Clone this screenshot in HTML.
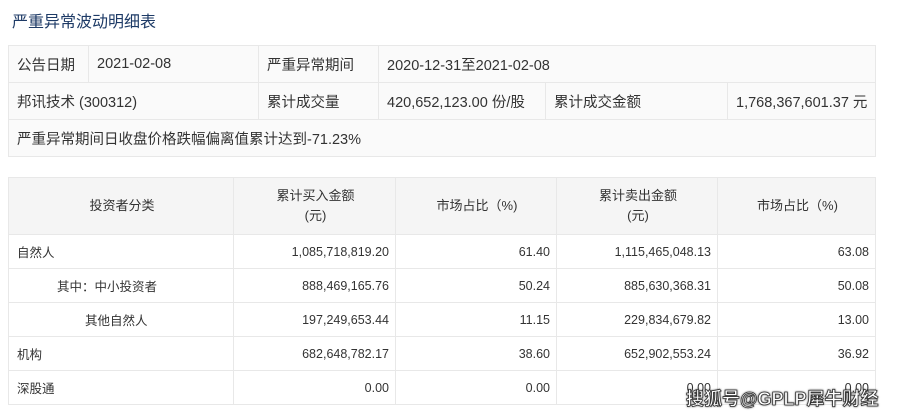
<!DOCTYPE html>
<html><head><meta charset="utf-8"><style>
body{margin:0;width:900px;height:418px;background:#fff;position:relative;overflow:hidden;font-family:"Liberation Sans","Noto Sans CJK SC",sans-serif;font-size:12.5px;color:#333}
.t{position:absolute;left:12px;top:8px;font-size:16px;color:#1d3a66}
.c{position:absolute;box-sizing:border-box;border:1px solid #e8e8e8;display:flex;align-items:center;padding:0 6px 0 8px;white-space:nowrap}
.a{background:#fafafa;font-size:14.5px}
.h{background:#f5f5f5;justify-content:center;text-align:center;line-height:20px;font-size:13px}
.r{justify-content:flex-end}
.w{position:absolute;left:686px;top:385px;font-size:18px;font-weight:bold;color:#fff;-webkit-text-stroke:0.8px #333;text-shadow:0 0 2px #000}
</style></head><body>
<div class="t">严重异常波动明细表</div>
<div class="c a" style="left:8px;top:45px;width:81px;height:38px">公告日期</div>
<div class="c a" style="left:88px;top:45px;width:171px;height:38px">2021-02-08</div>
<div class="c a" style="left:258px;top:45px;width:121px;height:38px">严重异常期间</div>
<div class="c a" style="left:378px;top:45px;width:498px;height:38px">2020-12-31至2021-02-08</div>
<div class="c a" style="left:8px;top:82px;width:251px;height:38px">邦讯技术 (300312)</div>
<div class="c a" style="left:258px;top:82px;width:121px;height:38px">累计成交量</div>
<div class="c a" style="left:378px;top:82px;width:168px;height:38px">420,652,123.00 份/股</div>
<div class="c a" style="left:545px;top:82px;width:183px;height:38px">累计成交金额</div>
<div class="c a" style="left:727px;top:82px;width:149px;height:38px">1,768,367,601.37 元</div>
<div class="c a" style="left:8px;top:119px;width:868px;height:38px">严重异常期间日收盘价格跌幅偏离值累计达到-71.23%</div>

<div class="c h" style="left:8px;top:177px;width:226px;height:58px">投资者分类</div>
<div class="c h" style="left:233px;top:177px;width:163px;height:58px">累计买入金额<br>(元)</div>
<div class="c h" style="left:395px;top:177px;width:162px;height:58px">市场占比（%)</div>
<div class="c h" style="left:556px;top:177px;width:162px;height:58px">累计卖出金额<br>(元)</div>
<div class="c h" style="left:717px;top:177px;width:159px;height:58px">市场占比（%)</div>

<div class="c" style="left:8px;top:234px;width:226px;height:35px">自然人</div>
<div class="c r" style="left:233px;top:234px;width:163px;height:35px">1,085,718,819.20</div>
<div class="c r" style="left:395px;top:234px;width:162px;height:35px">61.40</div>
<div class="c r" style="left:556px;top:234px;width:162px;height:35px">1,115,465,048.13</div>
<div class="c r" style="left:717px;top:234px;width:159px;height:35px">63.08</div>

<div class="c" style="left:8px;top:268px;width:226px;height:35px;padding-left:48px">其中：中小投资者</div>
<div class="c r" style="left:233px;top:268px;width:163px;height:35px">888,469,165.76</div>
<div class="c r" style="left:395px;top:268px;width:162px;height:35px">50.24</div>
<div class="c r" style="left:556px;top:268px;width:162px;height:35px">885,630,368.31</div>
<div class="c r" style="left:717px;top:268px;width:159px;height:35px">50.08</div>

<div class="c" style="left:8px;top:302px;width:226px;height:35px;padding-left:76px">其他自然人</div>
<div class="c r" style="left:233px;top:302px;width:163px;height:35px">197,249,653.44</div>
<div class="c r" style="left:395px;top:302px;width:162px;height:35px">11.15</div>
<div class="c r" style="left:556px;top:302px;width:162px;height:35px">229,834,679.82</div>
<div class="c r" style="left:717px;top:302px;width:159px;height:35px">13.00</div>

<div class="c" style="left:8px;top:336px;width:226px;height:35px">机构</div>
<div class="c r" style="left:233px;top:336px;width:163px;height:35px">682,648,782.17</div>
<div class="c r" style="left:395px;top:336px;width:162px;height:35px">38.60</div>
<div class="c r" style="left:556px;top:336px;width:162px;height:35px">652,902,553.24</div>
<div class="c r" style="left:717px;top:336px;width:159px;height:35px">36.92</div>

<div class="c" style="left:8px;top:370px;width:226px;height:35px">深股通</div>
<div class="c r" style="left:233px;top:370px;width:163px;height:35px">0.00</div>
<div class="c r" style="left:395px;top:370px;width:162px;height:35px">0.00</div>
<div class="c r" style="left:556px;top:370px;width:162px;height:35px">0.00</div>
<div class="c r" style="left:717px;top:370px;width:159px;height:35px">0.00</div>

<div class="w">搜狐号@GPLP犀牛财经</div>
</body></html>
